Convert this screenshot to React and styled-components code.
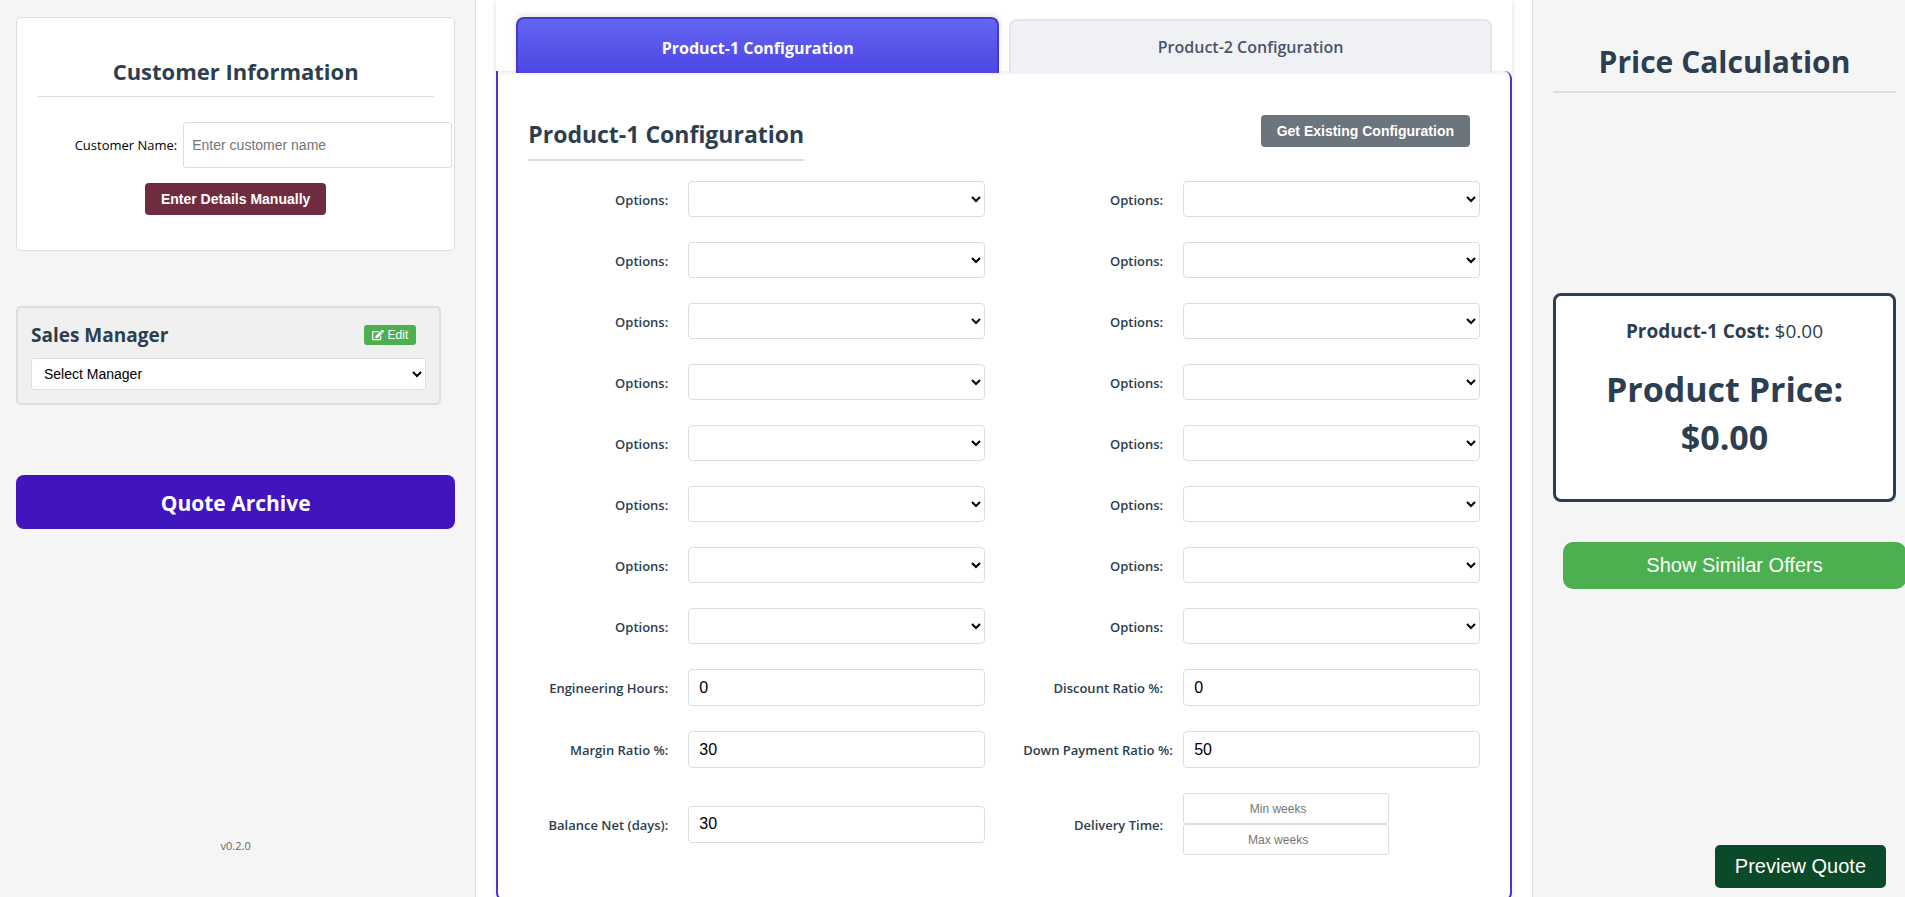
import { useState } from "react";
import styled, { createGlobalStyle } from "styled-components";
import { FaEdit } from "react-icons/fa";

const GlobalStyle = createGlobalStyle`
  * {
    box-sizing: border-box;
  }
  body {
    margin: 0;
    font-family: "Open Sans", "Noto Sans", sans-serif;
    background: #fff;
    color: #000;
  }
  button, input, select {
    font-family: "Liberation Sans", Arial, sans-serif;
  }
`;

const Page = styled.div`
  display: grid;
  grid-template-columns: 25% minmax(0, 1fr) 373px;
  height: 100vh;
  overflow: hidden;
`;

const LeftPanel = styled.aside`
  display: flex;
  flex-direction: column;
  padding: 17px 20px 43px 16px;
  background: #f5f5f5;
  border-right: 1px solid #ddd;
`;

const CustomerCard = styled.section`
  display: flex;
  flex-direction: column;
  align-items: center;
  height: 234px;
  padding: 35px 20px 0;
  background: #fff;
  border: 1px solid #ddd;
  border-radius: 5px;
`;

const CardTitle = styled.h2`
  width: 100%;
  margin: 0 0 25px;
  padding-bottom: 7px;
  border-bottom: 1px solid #ddd;
  color: #2c3e50;
  font-size: 22px;
  line-height: 36px;
  text-align: center;
`;

const CustomerRow = styled.div`
  display: flex;
  align-items: center;
  align-self: flex-end;
  gap: 6px;
  margin: 0 -18px 15px 0;
`;

const CustomerLabel = styled.label`
  font-size: 13px;
`;

const CustomerInput = styled.input`
  width: 269px;
  height: 46px;
  padding: 0 8px;
  border: 1px solid #ddd;
  border-radius: 3px;
  font-size: 14px;
`;

const SmallButton = styled.button`
  height: 32px;
  padding: 0 16px;
  border: none;
  border-radius: 4px;
  background: ${(props) => props.$color};
  color: #fff;
  font-size: 14px;
  font-weight: bold;
  white-space: nowrap;
`;

const ManagerCard = styled.section`
  margin: 55px 14px 70px 0;
  padding: 13px;
  background: #f0f0f0;
  border: 2px solid #ddd;
  border-radius: 5px;
`;

const ManagerHeader = styled.div`
  display: flex;
  align-items: center;
  justify-content: space-between;
  height: 28px;
  margin-bottom: 9px;
  padding-right: 10px;
`;

const ManagerTitle = styled.h3`
  margin: 0;
  color: #2c3e50;
  font-size: 19px;
`;

const EditButton = styled.button`
  display: flex;
  align-items: center;
  gap: 4px;
  height: 20px;
  padding: 0 8px;
  border: none;
  border-radius: 3px;
  background: #4caf50;
  color: #fff;
  font-size: 12px;
`;

const ManagerSelect = styled.select`
  width: 100%;
  height: 32px;
  padding: 0 8px;
  border: 1px solid #ddd;
  border-radius: 3px;
  background: #fff;
  font-size: 14px;
`;

const ArchiveButton = styled.button`
  height: 54px;
  padding-top: 3px;
  border: none;
  border-radius: 8px;
  background: #4015bd;
  color: #fff;
  font-family: "Open Sans", "Noto Sans", sans-serif;
  font-size: 21px;
  font-weight: bold;
`;

const Version = styled.span`
  margin-top: auto;
  color: #666;
  font-size: 11px;
  line-height: 16px;
  text-align: center;
`;

const Center = styled.main`
  padding: 0 20px;
  overflow: hidden;
`;

const Card = styled.div`
  box-shadow: 0 0 8px rgba(0, 0, 0, 0.07);
`;

const TabBar = styled.div`
  position: relative;
  z-index: 1;
  display: flex;
  align-items: flex-end;
  gap: 10px;
  height: 71px;
  padding: 0 20px;
  box-shadow: 0 2px 4px rgba(0, 0, 0, 0.08);
`;

/* tabs hang 2px over the panel below */
const Tab = styled.button`
  flex: 1;
  height: ${(props) => (props.$active ? 56 : 54)}px;
  margin-bottom: -2px;
  padding-top: ${(props) => (props.$active ? 4 : 1)}px;
  border: 2px solid ${(props) => (props.$active ? "#4338ca" : "#e2e6ea")};
  border-bottom: none;
  border-radius: 8px 8px 0 0;
  background: ${(props) =>
    props.$active ? "linear-gradient(#6366f1, #4f46e5)" : "#f0f1f5"};
  box-shadow: ${(props) =>
    props.$active ? "0 -2px 6px rgba(0, 0, 0, 0.1)" : "none"};
  color: ${(props) => (props.$active ? "#fff" : "#4a5568")};
  font-family: "Open Sans", "Noto Sans", sans-serif;
  font-size: 16px;
  font-weight: ${(props) => (props.$active ? 700 : 600)};
`;

const ConfigPanel = styled.section`
  padding: 39px 30px 44px;
  border: 2px solid #4338ca;
  border-top: none;
  border-radius: 0 8px 8px 8px;
  background: #fff;
`;

const ConfigHeader = styled.div`
  display: flex;
  align-items: flex-start;
  justify-content: space-between;
  margin-bottom: 20px;
  padding-right: 10px;
`;

const ConfigTitle = styled.h2`
  margin: 7px 0 0;
  padding-bottom: 8px;
  border-bottom: 2px solid #ddd;
  color: #2c3e50;
  font-size: 23px;
  line-height: 34px;
`;

const HeaderAction = styled.div`
  display: flex;
  padding-top: 5px;
`;

const FormGrid = styled.div`
  display: grid;
  grid-template-columns: 1fr 1fr;
  gap: 25px 38px;
`;

const Field = styled.div`
  display: grid;
  grid-template-columns: 140px minmax(0, 1fr);
  align-items: center;
  gap: 20px;
`;

const FieldLabel = styled.label`
  padding-top: 1px;
  color: #2c3e50;
  font-size: 13px;
  font-weight: 600;
  text-align: right;
  white-space: nowrap;
`;

const FieldSelect = styled.select`
  width: 100%;
  height: 36px;
  border: 1px solid #ddd;
  border-radius: 4px;
  background: #fff;
  font-size: 14px;
`;

const FieldInput = styled.input`
  width: 100%;
  height: 37px;
  padding: 0 10px;
  border: 1px solid #ddd;
  border-radius: 4px;
  font-size: 16px;
`;

const WeeksGroup = styled.div`
  display: flex;
  flex-direction: column;
  width: 206px;
`;

const WeeksInput = styled.input`
  height: 31px;
  padding: 0 24px 0 8px;
  border: 1px solid #ddd;
  border-radius: 3px;
  font-size: 12px;
  text-align: center;
`;

const RightPanel = styled.aside`
  display: flex;
  flex-direction: column;
  padding: 37px 9px 9px 20px;
  background: #f5f5f5;
  border-left: 1px solid #ddd;
`;

const PriceTitle = styled.h1`
  margin: 0 0 200px;
  padding-bottom: 4px;
  border-bottom: 2px solid #ddd;
  color: #2c3e50;
  font-size: 30px;
  line-height: 50px;
  text-align: center;
`;

const PriceBox = styled.section`
  height: 209px;
  padding: 20px;
  border: 3px solid #2c3e50;
  border-radius: 8px;
  background: #fff;
  color: #2c3e50;
  text-align: center;
`;

const Cost = styled.p`
  margin: 0 0 19px;
  font-size: 19px;
  line-height: 30px;
`;

const Price = styled.p`
  margin: 0 20px;
  font-size: 34px;
  font-weight: bold;
  line-height: 48px;
`;

const OffersButton = styled.button`
  height: 47px;
  margin: 40px -10px 0 10px;
  border: none;
  border-radius: 10px;
  background: #4caf50;
  color: #fff;
  font-size: 20px;
`;

const PreviewButton = styled.button`
  align-self: flex-end;
  height: 43px;
  margin: auto 10px 0 0;
  padding: 0 20px;
  border: none;
  border-radius: 5px;
  background: #0b4a28;
  color: #fff;
  font-size: 20px;
`;

const optionFields = Array.from({ length: 16 }, (_, i) => `option-${i + 1}`);

const numberFields = [
  { id: "engineering", label: "Engineering Hours:", value: "0" },
  { id: "discount", label: "Discount Ratio %:", value: "0" },
  { id: "margin", label: "Margin Ratio %:", value: "30" },
  { id: "downPayment", label: "Down Payment Ratio %:", value: "50" },
  { id: "balance", label: "Balance Net (days):", value: "30" },
];

function App() {
  const [product, setProduct] = useState(1);

  return (
    <>
      <GlobalStyle />
      <Page>
        <LeftPanel>
          <CustomerCard>
            <CardTitle>Customer Information</CardTitle>
            <CustomerRow>
              <CustomerLabel htmlFor="customer">Customer Name:</CustomerLabel>
              <CustomerInput id="customer" placeholder="Enter customer name" />
            </CustomerRow>
            <SmallButton $color="#6f2c3e">Enter Details Manually</SmallButton>
          </CustomerCard>

          <ManagerCard>
            <ManagerHeader>
              <ManagerTitle id="manager-title">Sales Manager</ManagerTitle>
              <EditButton>
                <FaEdit /> Edit
              </EditButton>
            </ManagerHeader>
            <ManagerSelect aria-labelledby="manager-title">
              <option>Select Manager</option>
            </ManagerSelect>
          </ManagerCard>

          <ArchiveButton>Quote Archive</ArchiveButton>
          <Version>v0.2.0</Version>
        </LeftPanel>

        <Center>
          <Card>
            <TabBar>
              <Tab $active={product === 1} onClick={() => setProduct(1)}>
                Product-1 Configuration
              </Tab>
              <Tab $active={product === 2} onClick={() => setProduct(2)}>
                Product-2 Configuration
              </Tab>
            </TabBar>
            <ConfigPanel>
              <ConfigHeader>
                <ConfigTitle>Product-{product} Configuration</ConfigTitle>
                <HeaderAction>
                  <SmallButton $color="#6c757d">
                    Get Existing Configuration
                  </SmallButton>
                </HeaderAction>
              </ConfigHeader>
              <FormGrid>
                {optionFields.map((id) => (
                  <Field key={id}>
                    <FieldLabel htmlFor={id}>Options:</FieldLabel>
                    <FieldSelect id={id} />
                  </Field>
                ))}
                {numberFields.map((field) => (
                  <Field key={field.id}>
                    <FieldLabel htmlFor={field.id}>{field.label}</FieldLabel>
                    <FieldInput id={field.id} defaultValue={field.value} />
                  </Field>
                ))}
                <Field>
                  <FieldLabel htmlFor="min-weeks">Delivery Time:</FieldLabel>
                  <WeeksGroup>
                    <WeeksInput id="min-weeks" placeholder="Min weeks" />
                    <WeeksInput
                      aria-label="Max weeks"
                      placeholder="Max weeks"
                    />
                  </WeeksGroup>
                </Field>
              </FormGrid>
            </ConfigPanel>
          </Card>
        </Center>

        <RightPanel>
          <PriceTitle>Price Calculation</PriceTitle>
          <PriceBox>
            <Cost>
              <strong>Product-1 Cost:</strong> $0.00
            </Cost>
            <Price>Product Price: $0.00</Price>
          </PriceBox>
          <OffersButton>Show Similar Offers</OffersButton>
          <PreviewButton>Preview Quote</PreviewButton>
        </RightPanel>
      </Page>
    </>
  );
}

export default App;
